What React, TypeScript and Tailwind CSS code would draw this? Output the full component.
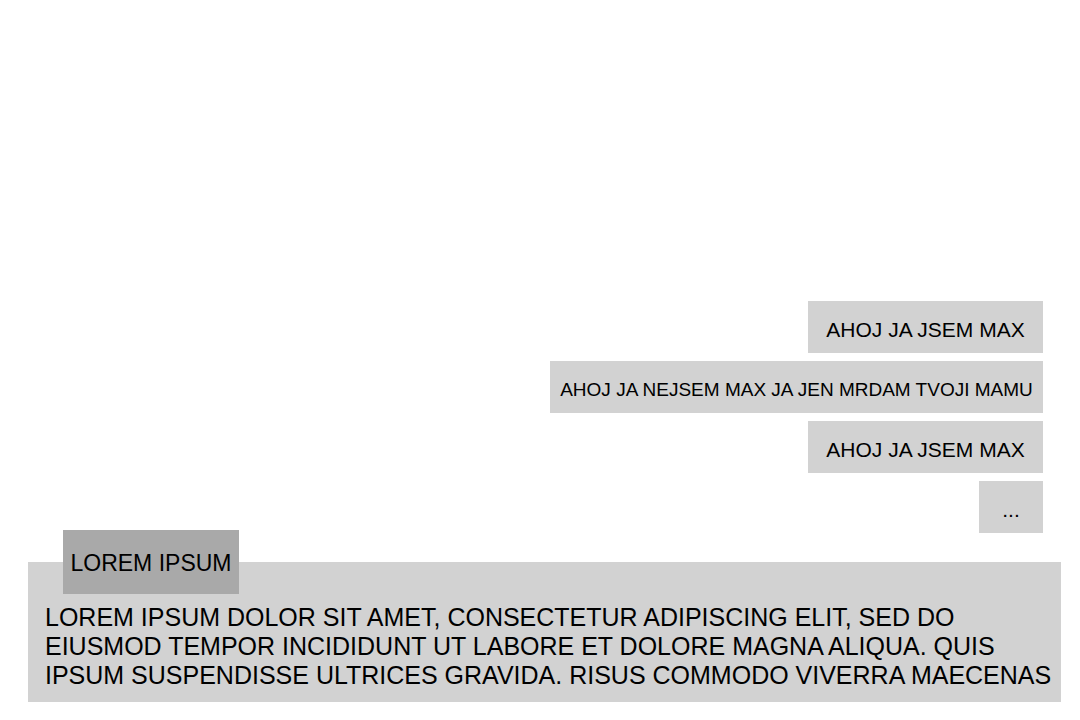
const choices = [
  { text: "AHOJ JA JSEM MAX", box: "w-[235px] text-[21px]" },
  { text: "AHOJ JA NEJSEM MAX JA JEN MRDAM TVOJI MAMU", box: "w-[493px] text-[19px]" },
  { text: "AHOJ JA JSEM MAX", box: "w-[235px] text-[21px]" },
  { text: "...", box: "w-16 text-[21px]" },
];

export default function App() {
  return (
    <main className="flex min-h-screen flex-col justify-end bg-white pr-[19px] pb-[18px] pl-7 font-['Liberation_Sans',Arial,sans-serif] text-black">
      <div className="flex flex-col items-end gap-2 pr-[18px]">
        {choices.map((choice, i) => (
          <button
            key={i}
            type="button"
            className={`h-[52px] bg-[#d2d2d2] pt-1.5 text-center whitespace-nowrap ${choice.box}`}
          >
            {choice.text}
          </button>
        ))}
      </div>
      <section className="relative mt-[29px] bg-[#d2d2d2] pt-[41px] pr-1 pb-3 pl-[17px]">
        <h2 className="absolute -top-8 left-[35px] flex h-16 w-44 items-center justify-center bg-[#a9a9a9] pt-0.5 text-[23px] whitespace-nowrap">
          LOREM IPSUM
        </h2>
        <p className="text-[25px] leading-[29px]">
          LOREM IPSUM DOLOR SIT AMET, CONSECTETUR ADIPISCING ELIT, SED DO
          EIUSMOD TEMPOR INCIDIDUNT UT LABORE ET DOLORE MAGNA ALIQUA. QUIS
          IPSUM SUSPENDISSE ULTRICES GRAVIDA. RISUS COMMODO VIVERRA MAECENAS
        </p>
      </section>
    </main>
  );
}
